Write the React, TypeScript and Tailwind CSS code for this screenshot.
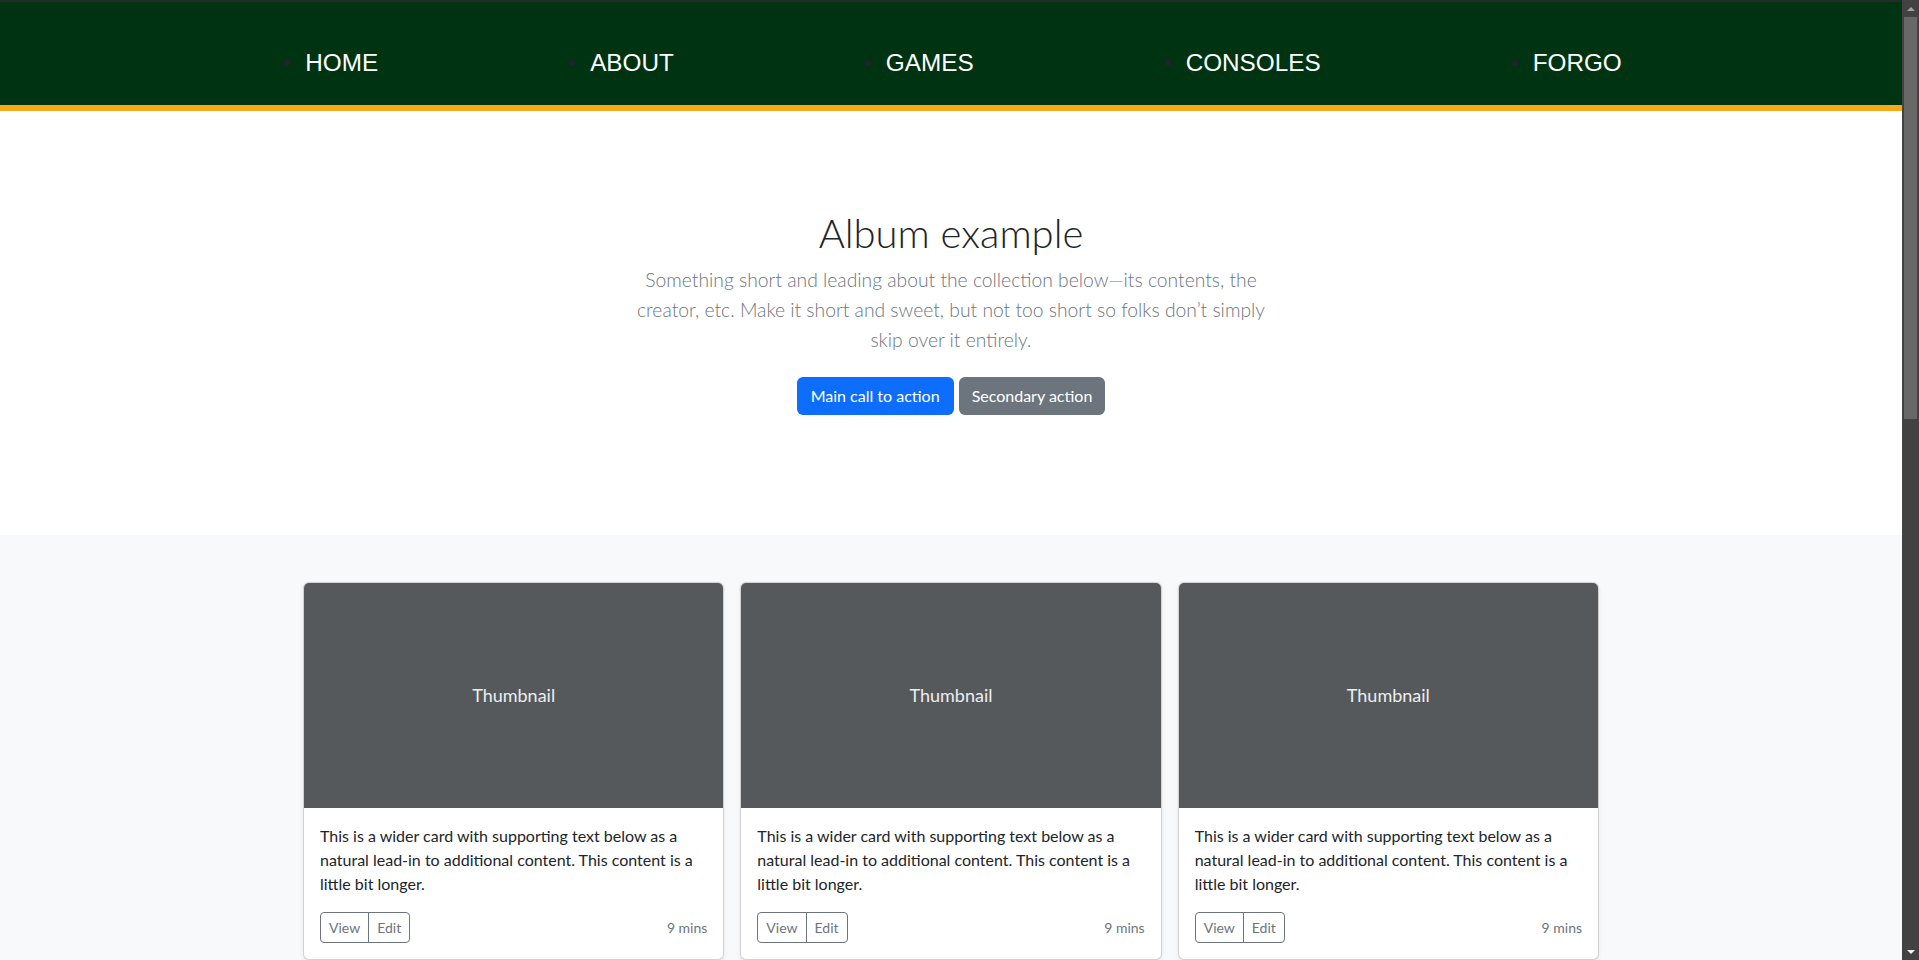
import React from 'react';

const NAV_ITEMS = ['HOME', 'ABOUT', 'GAMES', 'CONSOLES', 'FORGO'];

const bodyFont = { fontFamily: '"Segoe UI", Lato, "Noto Sans", sans-serif' };

const NavBar = () => (
  <nav className="border-t-2 border-t-[#262a26] border-b-[6px] border-b-[#f7a818] bg-[#003311]">
    <ul className="flex h-[103px] items-start justify-center gap-[191px] pl-1 pt-[47px] font-['Liberation_Sans',Arial,sans-serif]">
      {NAV_ITEMS.map((item) => (
        <li key={item} className="flex items-center">
          <span className="mr-[15px] h-[6px] w-[6px] rounded-full bg-[#2a1f2a]" />
          <a className="text-[24.3px] leading-[28px] text-white">{item}</a>
        </li>
      ))}
    </ul>
  </nav>
);

const Hero = () => (
  <section className="flex flex-col items-center bg-white pt-[98px] pb-[120px] text-center">
    <h1 className="mb-2 text-[40px] font-light leading-[48px] text-[#212529]">Album example</h1>
    <p className="mb-[22px] whitespace-nowrap text-[19.3px] font-light leading-[30px] text-[#6c757d]">
      Something short and leading about the collection below—its contents, the
      <br />
      creator, etc. Make it short and sweet, but not too short so folks don’t simply
      <br />
      skip over it entirely.
    </p>
    <div className="flex gap-[5px]">
      <button className="h-[38px] rounded-[6px] bg-[#0d6efd] px-[14px] text-[16px] text-white">Main call to action</button>
      <button className="h-[38px] rounded-[6px] bg-[#6c757d] px-[13px] text-[16px] text-white">Secondary action</button>
    </div>
  </section>
);

const Card = () => (
  <div className="flex flex-col overflow-hidden rounded-[6px] border border-black/[0.175] bg-white shadow-[0_2px_4px_rgba(0,0,0,0.075)]">
    <div className="flex h-[225px] items-center justify-center bg-[#55595c] text-[18px] text-[#eceeef]">Thumbnail</div>
    <div className="p-4">
      <p className="mb-4 whitespace-nowrap text-[16px] leading-6 text-[#212529]">
        This is a wider card with supporting text below as a
        <br />
        natural lead-in to additional content. This content is a
        <br />
        little bit longer.
      </p>
      <div className="flex items-center justify-between">
        <div className="flex">
          <button className="h-[31px] rounded-l-[4px] border border-[#6c757d] px-2 text-[14px] text-[#6c757d]">View</button>
          <button className="-ml-px h-[31px] rounded-r-[4px] border border-[#6c757d] px-2 text-[14px] text-[#6c757d]">Edit</button>
        </div>
        <small className="text-[14px] text-[#6c757d]">9 mins</small>
      </div>
    </div>
  </div>
);

const Scrollbar = () => (
  <aside className="flex w-[17px] shrink-0 flex-col items-center bg-[#424242]">
    <div className="flex h-[17px] items-center justify-center">
      <span className="h-0 w-0 border-x-[4px] border-b-[4px] border-x-transparent border-b-[#a3a3a3]" />
    </div>
    <div className="h-[402px] w-[13px] bg-[#686868]" />
    <div className="flex-1" />
    <div className="flex h-[17px] items-center justify-center">
      <span className="h-0 w-0 border-x-[4px] border-t-[4px] border-x-transparent border-t-[#f0f0f0]" />
    </div>
  </aside>
);

export default function App() {
  return (
    <div className="flex h-screen overflow-hidden" style={bodyFont}>
      <main className="min-w-0 flex-1 overflow-hidden">
        <NavBar />
        <Hero />
        <section className="bg-[#f8f9fa] pt-[47px] pb-12">
          <div className="mx-auto grid w-[1296px] grid-cols-3 gap-4">
            <Card />
            <Card />
            <Card />
          </div>
        </section>
      </main>
      <Scrollbar />
    </div>
  );
}
